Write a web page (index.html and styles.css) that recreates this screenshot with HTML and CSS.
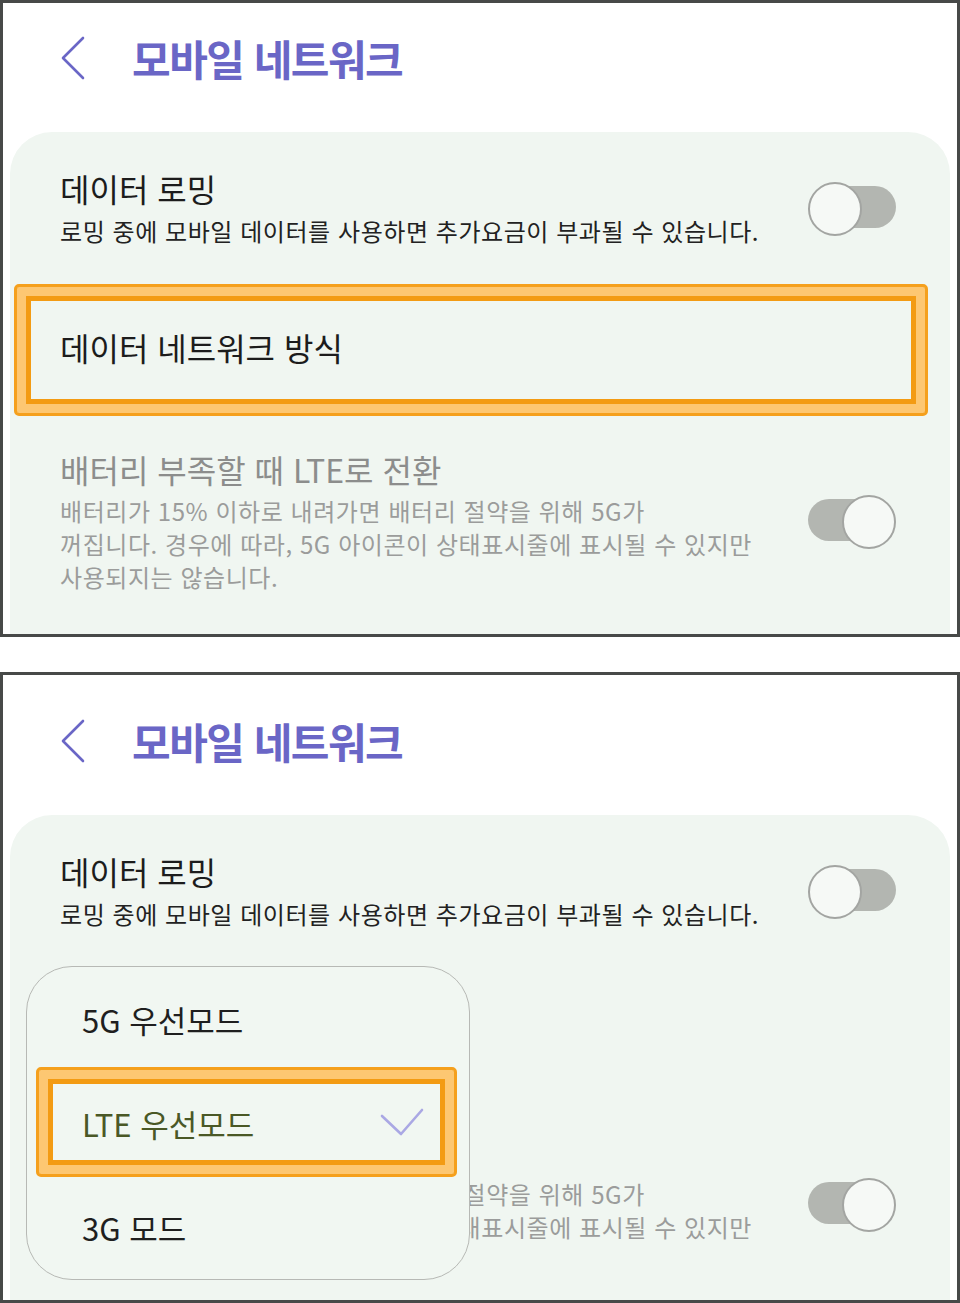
FILE: index.html
```html
<!DOCTYPE html>
<html lang="ko">
<head>
<meta charset="utf-8">
<title>모바일 네트워크</title>
<link rel="stylesheet" href="styles.css">
</head>
<body>
<div class="panel panel--a">
  <div class="screen">
    <header class="appbar">
      <svg class="back" viewBox="0 0 26 44" width="26" height="44"><path d="M23 2 L3 22 L23 42" fill="none" stroke="#6a66c6" stroke-width="2.6" stroke-linecap="round" stroke-linejoin="round"/></svg>
      <h1 class="appbar-title">모바일 네트워크</h1>
    </header>
    <section class="card">
      <div class="row row--roaming">
        <div class="row-text">
          <div class="row-title">데이터 로밍</div>
          <div class="row-sub">로밍 중에 모바일 데이터를 사용하면 추가요금이 부과될 수 있습니다.</div>
        </div>
        <span class="toggle toggle--off"></span>
      </div>
      <div class="row row--network">
        <div class="row-title">데이터 네트워크 방식</div>
        <span class="highlight"></span>
      </div>
      <div class="row row--battery is-disabled">
        <div class="row-text">
          <div class="row-title">배터리 부족할 때 LTE로 전환</div>
          <div class="row-sub">배터리가 15% 이하로 내려가면 배터리 절약을 위해 5G가<br>꺼집니다. 경우에 따라, 5G 아이콘이 상태표시줄에 표시될 수 있지만<br>사용되지는 않습니다.</div>
        </div>
        <span class="toggle toggle--on"></span>
      </div>
    </section>
  </div>
</div>

<div class="panel panel--b">
  <div class="screen">
    <header class="appbar">
      <svg class="back" viewBox="0 0 26 44" width="26" height="44"><path d="M23 2 L3 22 L23 42" fill="none" stroke="#6a66c6" stroke-width="2.6" stroke-linecap="round" stroke-linejoin="round"/></svg>
      <h1 class="appbar-title">모바일 네트워크</h1>
    </header>
    <section class="card">
      <div class="row row--roaming">
        <div class="row-text">
          <div class="row-title">데이터 로밍</div>
          <div class="row-sub">로밍 중에 모바일 데이터를 사용하면 추가요금이 부과될 수 있습니다.</div>
        </div>
        <span class="toggle toggle--off"></span>
      </div>
      <div class="row row--network">
        <div class="row-title">데이터 네트워크 방식</div>
      </div>
      <div class="row row--battery is-disabled">
        <div class="row-text">
          <div class="row-title">배터리 부족할 때 LTE로 전환</div>
          <div class="row-sub">배터리가 15% 이하로 내려가면 배터리 절약을 위해 5G가<br>꺼집니다. 경우에 따라, 5G 아이콘이 상태표시줄에 표시될 수 있지만<br>사용되지는 않습니다.</div>
        </div>
        <span class="toggle toggle--on"></span>
      </div>

      <ul class="menu">
        <li class="menu-item">5G 우선모드</li>
        <li class="menu-item menu-item--selected">
          <span>LTE 우선모드</span>
          <svg class="check" viewBox="0 0 44 32" width="44" height="32"><path d="M2 9 L21 27 L42 3" fill="none" stroke="#aaa8e4" stroke-width="2.6" stroke-linecap="round" stroke-linejoin="round"/></svg>
          <span class="highlight highlight--menu"></span>
        </li>
        <li class="menu-item">3G 모드</li>
      </ul>
    </section>
  </div>
</div>
</body>
</html>
```

FILE: styles.css
```css
* { box-sizing: border-box; }

html, body {
  margin: 0;
  padding: 0;
  background: #ffffff;
}

body {
  width: 960px;
  font-family: "Noto Sans CJK KR", "Noto Sans", sans-serif;
  color: #1c1c1c;
}

.panel {
  border: 3px solid #474948;
  background: #ffffff;
  overflow: hidden;
}

.panel--a {
  height: 637px;
}

.panel--a .screen {
  margin-top: -11px;
}

.panel--b {
  margin-top: 35px;
  height: 631px;
}

.appbar {
  height: 140px;
  padding: 44px 0 0 57px;
  display: flex;
  align-items: flex-start;
  gap: 46px;
}

.back {
  display: block;
  flex-shrink: 0;
}

.appbar-title {
  margin: 0;
  font-size: 42px;
  line-height: 44px;
  font-weight: 700;
  letter-spacing: -1.5px;
  color: #6a66c6;
}

.card {
  position: relative;
  margin: 0 7px;
  height: 720px;
  background: #f0f6f1;
  border-radius: 42px 42px 0 0;
}

.row {
  position: relative;
  display: flex;
  align-items: center;
  padding-left: 50px;
  padding-right: 54px;
}

.row-text {
  flex: 1;
}

.row-title {
  font-size: 32px;
  line-height: 44px;
  letter-spacing: 0;
  color: #1c1c1c;
}

.row-sub {
  font-size: 24px;
  line-height: 33px;
  letter-spacing: 0.55px;
  color: #222222;
}

.row--roaming {
  padding-top: 34px;
  padding-bottom: 25px;
}

.row--roaming .row-sub {
  margin-top: 4px;
}

.row--network {
  height: 150px;
}

.row--battery {
  padding-top: 25px;
}

.row--battery .row-sub {
  margin-top: 3px;
}

.is-disabled .row-title {
  color: #8c8d8c;
}

.is-disabled .row-sub {
  color: #9b9c9b;
}

/* toggle switch */
.toggle {
  position: relative;
  flex-shrink: 0;
  width: 88px;
  height: 50px;
  margin-left: auto;
}

.toggle::before {
  content: "";
  position: absolute;
  top: 4px;
  bottom: 4px;
  border-radius: 21px;
  background: #b3b6b1;
}

.toggle::after {
  content: "";
  position: absolute;
  top: 0;
  width: 50px;
  height: 50px;
  border-radius: 50%;
  background: #f6f9f6;
  border: 2px solid #a3a5a2;
}

.toggle--off::before { left: 8px; right: 0; }
.toggle--off::after { left: 0; }

.toggle--on::before { left: 0; right: 8px; }
.toggle--on::after { right: 0; }

/* orange annotation box */
.highlight {
  position: absolute;
  left: 4px;
  right: 22px;
  top: 12px;
  bottom: 6px;
  border: 3px solid #f5a01d;
  border-radius: 5px;
  box-shadow: inset 0 0 0 9px #fdc772, inset 0 0 0 14px #f39b13;
  pointer-events: none;
}

/* popup menu */
.menu {
  position: absolute;
  left: 16px;
  top: 151px;
  width: 444px;
  margin: 0;
  padding: 0;
  list-style: none;
  background: #f1f7f2;
  border: 1.5px solid #b7b9b5;
  border-radius: 46px;
}

.menu-item {
  position: relative;
  height: 104px;
  display: flex;
  align-items: center;
  padding-left: 55px;
  padding-right: 45px;
  font-size: 31px;
  letter-spacing: 0;
  color: #1f1f1f;
}

.menu-item--selected {
  color: #4a5826;
}

.check {
  display: block;
  margin-left: auto;
}

.highlight--menu {
  left: 9px;
  right: 12px;
  top: -4px;
  bottom: -2px;
}
```
